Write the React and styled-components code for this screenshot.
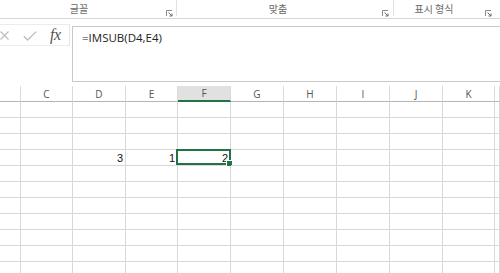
import React from "react";
import styled, { createGlobalStyle } from "styled-components";

const GlobalStyle = createGlobalStyle`
  html, body {
    margin: 0;
    padding: 0;
    background: #ffffff;
    overflow: hidden;
  }
  body {
    font-family: "Open Sans", "Noto Sans CJK KR", sans-serif;
  }
`;

const Page = styled.div`
  width: 500px;
  height: 273px;
  overflow: hidden;
  background: #fff;
`;

const Ribbon = styled.div`
  display: flex;
  height: 18px;
  border-bottom: 1px solid #d6d6d6;
`;

const Group = styled.div`
  position: relative;
  width: ${({ w }) => w}px;
  flex: none;
  display: flex;
  align-items: flex-end;
  justify-content: center;
  padding-right: ${({ shift }) => shift}px;
  box-sizing: border-box;
  border-right: ${({ last }) => (last ? "none" : "1px solid #e2e2e2")};
  height: 16px;
`;

const GroupLabel = styled.span`
  font-family: "Noto Sans CJK KR", sans-serif;
  font-size: 10px;
  line-height: 12px;
  color: #6a6a6a;
  padding-bottom: 1px;
`;

const Launcher = styled.svg`
  position: absolute;
  right: ${({ r }) => r}px;
  top: 10px;
`;

const FormulaRow = styled.div`
  display: flex;
  align-items: flex-start;
  height: 67px;
`;

const Controls = styled.div`
  width: 69px;
  height: 20px;
  margin-top: 5px;
  border-top: 1px solid #ececec;
  border-bottom: 1px solid #ececec;
  border-right: 1px solid #e4e4e4;
  position: relative;
`;

const ControlIcon = styled.svg`
  position: absolute;
  left: ${({ x }) => x}px;
  top: ${({ y }) => y}px;
`;

const Fx = styled.span`
  position: absolute;
  left: 50px;
  top: 1px;
  font-family: "Liberation Serif", "DejaVu Serif", serif;
  font-style: italic;
  font-size: 16px;
  line-height: 18px;
  color: #555;
  letter-spacing: -0.5px;
`;

const FormulaInput = styled.div`
  flex: 1;
  margin-left: 2px;
  margin-top: 7px;
  height: 51px;
  border: 1px solid #c8c8c8;
  border-right: none;
  padding: 3px 0 0 9px;
  font-family: "Open Sans", sans-serif;
  font-size: 11.5px;
  line-height: 15px;
  color: #222;
`;

const Sheet = styled.div`
  display: grid;
  grid-template-columns: 21px 52px 53px 52px 53px 53px 53px 53px 53px 52px 1fr;
`;

const HeaderCell = styled.div`
  border-bottom: ${({ active }) => (active ? "2px solid #217346" : "1px solid #b5b5b5")};
  height: ${({ active }) => (active ? "14px" : "15px")};
  border-right: 1px solid #dadada;
  background: ${({ active }) => (active ? "#e1e1e1" : "#fff")};
  display: flex;
  align-items: center;
  justify-content: center;
  font-family: "Open Sans", sans-serif;
  font-size: 10px;
  color: #555;
`;

const Cell = styled.div`
  position: relative;
  height: 15px;
  border-bottom: 1px solid #d8d8d8;
  border-right: 1px solid #d8d8d8;
  display: flex;
  align-items: flex-end;
  justify-content: flex-end;
  padding-right: 2px;
  font-family: "Liberation Sans", Arial, sans-serif;
  font-size: 11px;
  line-height: 13px;
  color: #111;
`;

const Selection = styled.div`
  position: absolute;
  left: -2px;
  top: -1px;
  right: -1px;
  bottom: 0;
  border: 2px solid #217346;
  box-sizing: border-box;
  pointer-events: none;
`;

const FillHandle = styled.div`
  position: absolute;
  right: -4px;
  bottom: -4px;
  width: 5px;
  height: 5px;
  background: #217346;
  border: 1px solid #fff;
`;

const columns = ["", "C", "D", "E", "F", "G", "H", "I", "J", "K", ""];
const values = { "4-D": "3", "4-E": "1", "4-F": "2" };

const LauncherIcon = ({ r }) => (
  <Launcher r={r} width="7" height="7" viewBox="0 0 7 7">
    <path d="M0.5 6V0.5H6" fill="none" stroke="#8a8a8a" strokeWidth="1" />
    <path d="M2.5 2.5L6 6M6 3.5V6H3.5" fill="none" stroke="#6a6a6a" strokeWidth="1" />
  </Launcher>
);

export default function App() {
  const rows = Array.from({ length: 11 }, (_, i) => i + 1);
  return (
    <Page>
      <GlobalStyle />
      <Ribbon>
        <Group w={177} shift={18}>
          <GroupLabel>글꼴</GroupLabel>
          <LauncherIcon r={3} />
        </Group>
        <Group w={217} shift={14}>
          <GroupLabel>맞춤</GroupLabel>
          <LauncherIcon r={4} />
        </Group>
        <Group w={106} shift={26} last>
          <GroupLabel>표시 형식</GroupLabel>
          <LauncherIcon r={8} />
        </Group>
      </Ribbon>
      <FormulaRow>
        <Controls>
          <ControlIcon x={0} y={6} width="9" height="9" viewBox="0 0 9 9">
            <path d="M0.5 0.5L8.5 8.5M8.5 0.5L0.5 8.5" stroke="#bdbdbd" strokeWidth="1.2" />
          </ControlIcon>
          <ControlIcon x={23} y={6} width="14" height="10" viewBox="0 0 14 10">
            <path d="M0.8 5.2L4.6 9L13.2 0.6" fill="none" stroke="#bdbdbd" strokeWidth="1.3" />
          </ControlIcon>
          <Fx>fx</Fx>
        </Controls>
        <FormulaInput>=IMSUB(D4,E4)</FormulaInput>
      </FormulaRow>
      <Sheet>
        {columns.map((c, i) => (
          <HeaderCell key={"h" + i} active={c === "F"}>
            {c}
          </HeaderCell>
        ))}
        {rows.map((r) =>
          columns.map((c, i) => {
            const key = r + "-" + c;
            const selected = r === 4 && c === "F";
            return (
              <Cell key={r + "_" + i}>
                {values[key]}
                {selected && (
                  <Selection>
                    <FillHandle />
                  </Selection>
                )}
              </Cell>
            );
          })
        )}
      </Sheet>
    </Page>
  );
}
